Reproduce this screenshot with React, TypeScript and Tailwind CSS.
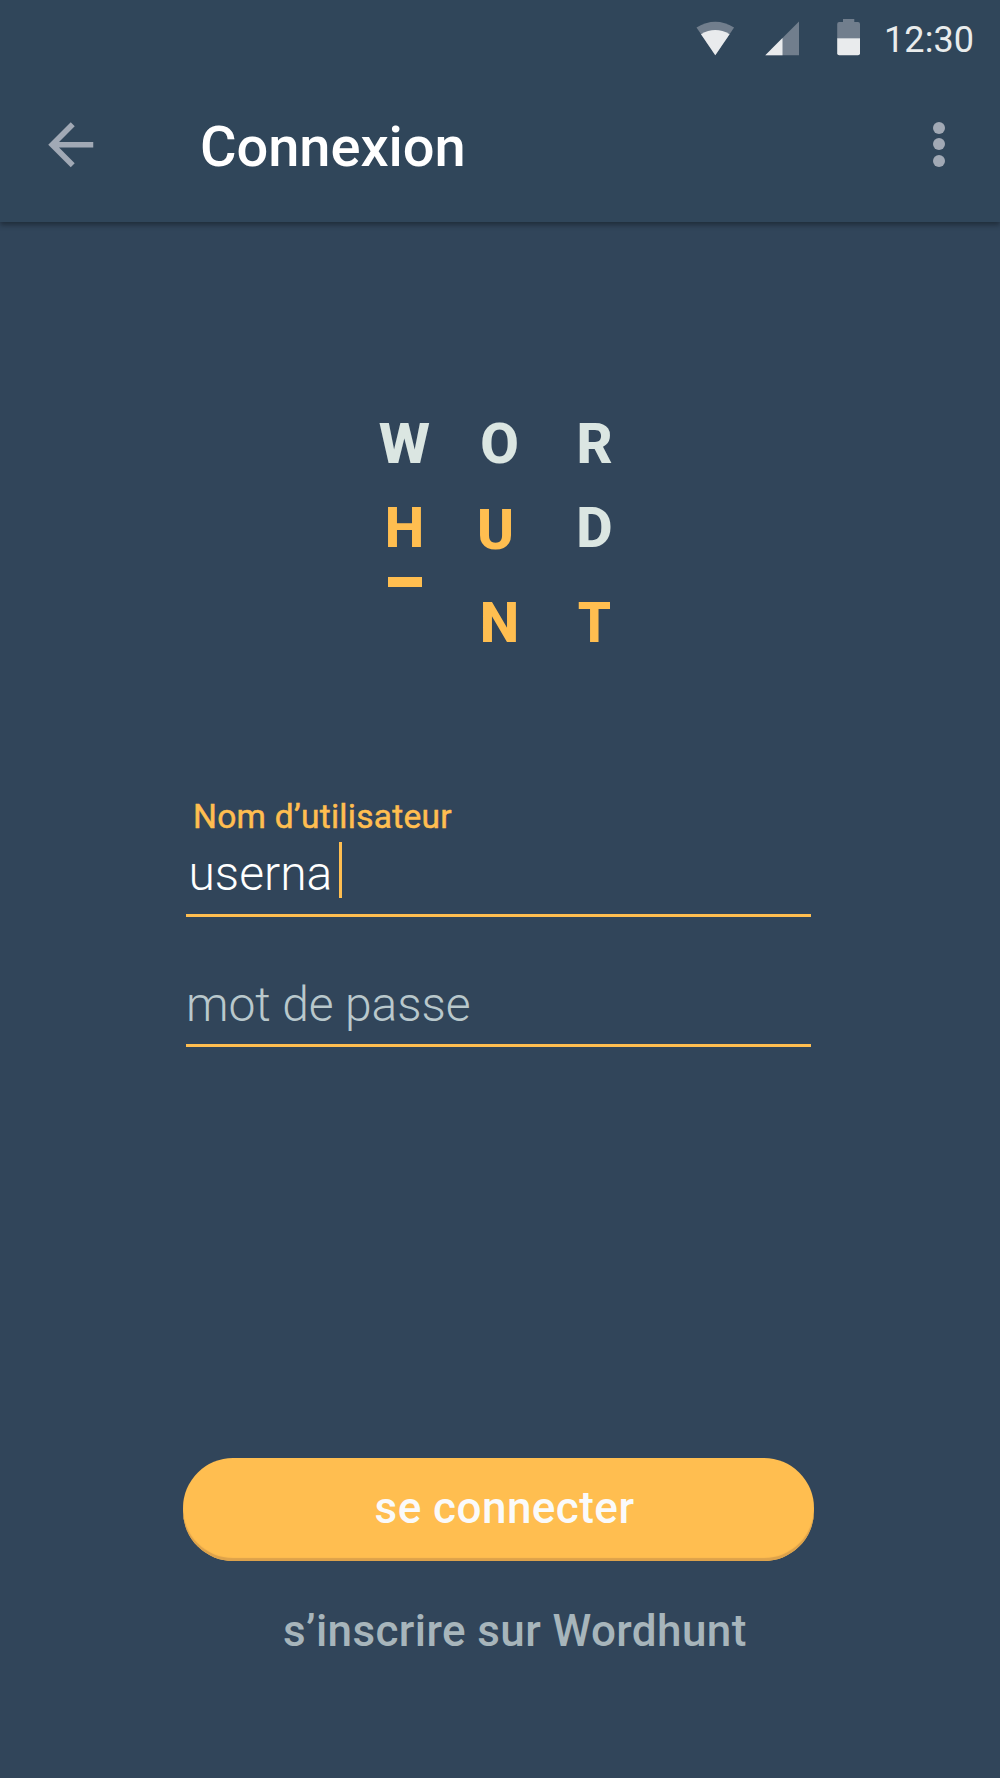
function StatusIcons() {
  return (
    <svg className="h-20 w-[180px]" viewBox="690 0 180 80">
      {/* wifi */}
      <path d="M696.5 27.5Q715.3 16 734.1 27.5L715.3 55.2Z" fill="#717e8d" />
      <path d="M701 34.2Q715.3 26 729.6 34.2L715.3 55.2Z" fill="#e9ebed" />
      {/* signal */}
      <path d="M799 21.5V55.2H765.3Z" fill="#717e8d" />
      <path d="M782.5 38V55.2H765.3Z" fill="#e9ebed" />
      {/* battery */}
      <path d="M843 19H854.3V22H858Q860 22 860 24V38.5H837.2V24Q837.2 22 839.2 22H843Z" fill="#717e8d" />
      <path d="M837.2 38.3H860V53.2Q860 55.2 858 55.2H839.2Q837.2 55.2 837.2 53.2Z" fill="#e9ebed" />
    </svg>
  );
}

export default function App() {
  return (
    <main className="flex h-[1778px] w-[1000px] flex-col overflow-hidden bg-[#31455a] font-['Roboto',sans-serif] text-white">
      <header className="h-[222px] shrink-0 bg-[#30465a] shadow-[0_3px_5px_rgba(0,0,0,0.35)]">
        <div className="flex h-20 items-center justify-end pr-[27px]">
          <StatusIcons />
          <span className="ml-[14px] w-[89px] text-right text-[36px] tracking-[0.1px] text-[#e9ecec]">12:30</span>
        </div>
        <div className="flex h-[134px] items-center">
          <button className="-mt-[5px] ml-[37.25px]" aria-label="Retour">
            <svg className="size-[67.5px]" viewBox="0 0 24 24" fill="#a1a9b5">
              <path d="M20 11H7.83l5.59-5.59L12 4l-8 8 8 8 1.41-1.41L7.83 13H20v-2z" />
            </svg>
          </button>
          <h1 className="ml-[95.25px] flex-1 text-[56px] font-medium tracking-[-0.05px]">Connexion</h1>
          <button className="-mt-[5.5px] mr-[55px] flex flex-col gap-[4.7px]" aria-label="Menu">
            <span className="size-3 rounded-full bg-[#a1a9b5]" />
            <span className="size-3 rounded-full bg-[#a1a9b5]" />
            <span className="size-3 rounded-full bg-[#a1a9b5]" />
          </button>
        </div>
      </header>

      <div className="mt-[180px] ml-[357px] grid w-[285px] grid-cols-3 text-center text-[56px] leading-[84px] font-extrabold text-[#dbe6e2]">
        <span className="scale-x-105">W</span>
        <span>O</span>
        <span>R</span>
        <span className="text-[#ffbe50]">H</span>
        <span className="relative top-[2px] right-[4px] text-[#ffbe50]">U</span>
        <span>D</span>
      </div>
      <div className="mt-[7px] ml-[388px] h-[9.7px] w-[34px] shrink-0 bg-[#ffbe50]" />
      <div className="mt-[8.3px] ml-[452px] grid w-[190px] grid-cols-2 text-center text-[56px] leading-[56px] font-extrabold text-[#ffbe50]">
        <span>N</span>
        <span className="scale-x-95">T</span>
      </div>

      <form className="mt-[146px] ml-[186px] w-[625px]">
        <label className="block pl-[7px] text-[33.5px] leading-[40px] tracking-[0.27px] text-[#ffbe50] [-webkit-text-stroke:0.5px_#ffbe50]">Nom d’utilisateur</label>
        <div className="flex h-[80px] items-start border-b-[3px] border-[#ffbe50] pl-[2.5px] text-[48px] leading-[73px] font-light">
          userna
          <span className="mt-[5px] ml-[6.5px] h-[56px] w-[3px] bg-[#ffbe50]" />
        </div>
        <div className="h-[130.5px] border-b-[3px] border-[#ffbe50] pt-[51px] text-[48px] leading-[73px] font-light tracking-[-0.1px] text-[#b9c8cc]">
          mot de passe
        </div>
      </form>

      <button className="mt-[410.5px] ml-[183px] h-[103.5px] w-[631px] shrink-0 rounded-[50px] bg-[#ffbe50] pb-[4px] pl-[12px] text-[44px] font-medium tracking-[0.45px] text-[#fafafa] shadow-[inset_0_-3px_1px_#dda24b]">
        se connecter
      </button>
      <a className="mt-[42px] ml-[283px] text-[44px] leading-[56px] font-medium tracking-[0.4px] text-[#a7b5bb]">s’inscrire sur Wordhunt</a>
    </main>
  );
}
